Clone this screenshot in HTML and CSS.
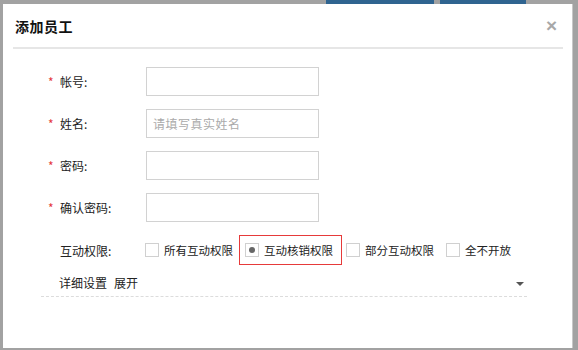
FILE: index.html
```html
<!DOCTYPE html>
<html lang="zh-CN">
<head>
    <meta charset="UTF-8">
    <meta name="viewport" content="width=device-width, initial-scale=1.0">
    <title>添加员工</title>
    <link rel="stylesheet" href="styles.css">
</head>
<body>
    <div class="backdrop-bar">
        <span class="bg-button bg-button-a"></span>
        <span class="bg-button bg-button-b"></span>
    </div>

    <div class="dialog">
        <header class="dialog-header">
            <h1 class="dialog-title">添加员工</h1>
            <span class="dialog-close">&times;</span>
        </header>

        <form class="staff-form">
            <div class="form-row">
                <label class="form-label"><span class="required">*</span>帐号:</label>
                <input type="text" class="form-input">
            </div>
            <div class="form-row">
                <label class="form-label"><span class="required">*</span>姓名:</label>
                <input type="text" class="form-input" placeholder="请填写真实姓名">
            </div>
            <div class="form-row">
                <label class="form-label"><span class="required">*</span>密码:</label>
                <input type="password" class="form-input">
            </div>
            <div class="form-row">
                <label class="form-label"><span class="required">*</span>确认密码:</label>
                <input type="password" class="form-input">
            </div>

            <div class="perm-row">
                <span class="perm-label">互动权限:</span>
                <div class="perm-options">
                    <span class="perm-option"><span class="check-box"></span>所有互动权限</span>
                    <span class="perm-option is-selected"><span class="check-box"><span class="check-dot"></span></span>互动核销权限</span>
                    <span class="perm-option"><span class="check-box"></span>部分互动权限</span>
                    <span class="perm-option"><span class="check-box"></span>全不开放</span>
                </div>
            </div>

            <div class="detail-row">
                <span class="detail-text">详细设置</span>
                <span class="detail-toggle">展开</span>
                <span class="detail-arrow"></span>
            </div>
        </form>
    </div>
</body>
</html>
```

FILE: styles.css
```css
* {
    margin: 0;
    padding: 0;
    box-sizing: border-box;
}

html, body {
    height: 100%;
}

body {
    font-family: "Noto Sans CJK SC", "Liberation Sans", sans-serif;
    font-size: 12px;
    color: #222;
    background-color: #a2a2a2;
    display: flex;
    flex-direction: column;
    overflow: hidden;
}

.backdrop-bar {
    height: 4px;
    display: flex;
    flex-shrink: 0;
}

.bg-button {
    height: 4px;
    background-color: #2f6490;
}

.bg-button-a {
    margin-left: 326px;
    width: 108px;
}

.bg-button-b {
    margin-left: 6px;
    width: 86px;
}

.dialog {
    flex: 1;
    margin: 0 5px 2px 3px;
    background-color: #fff;
    border-right: 1px solid #c8c8c8;
}

.dialog-header {
    height: 45px;
    margin: 0 9px 0 10px;
    border-bottom: 2px solid #e6e6e6;
    display: flex;
    align-items: center;
    justify-content: space-between;
    padding: 0 6px 0 2px;
}

.dialog-title {
    font-size: 14px;
    font-weight: bold;
    color: #111;
    letter-spacing: 0.5px;
}

.dialog-close {
    font-family: "Liberation Sans", sans-serif;
    font-size: 19px;
    font-weight: bold;
    color: #a8a8a8;
    line-height: 1;
}

.staff-form {
    padding: 18px 0 0 45px;
}

.form-row {
    display: flex;
    align-items: center;
    height: 29px;
    margin-bottom: 13px;
}

.form-label {
    width: 98px;
    display: flex;
    align-items: center;
    color: #222;
}

.required {
    color: #e4393c;
    width: 12px;
    font-size: 12px;
}

.form-input {
    width: 173px;
    height: 29px;
    border: 1px solid #d2d2d2;
    padding: 0 6px;
    font-family: inherit;
    font-size: 12px;
    outline: none;
}

.form-input::placeholder {
    color: #aaa;
    letter-spacing: 0.5px;
}

.perm-row {
    display: flex;
    align-items: center;
    margin-top: 10px;
    padding-left: 12px;
}

.perm-label {
    width: 84px;
}

.perm-options {
    display: flex;
    align-items: center;
    font-size: 11.5px;
}

.perm-option {
    display: flex;
    align-items: center;
    height: 30px;
    margin-right: 10px;
    border: 1px solid transparent;
}

.perm-option:first-child {
    margin-right: 5px;
}

.perm-option.is-selected {
    border-color: #e63a3a;
    padding: 0 8px 0 5px;
    margin-right: 3px;
}

.check-box {
    width: 14px;
    height: 14px;
    border: 1px solid #d0d0d0;
    margin-right: 5px;
    display: flex;
    align-items: center;
    justify-content: center;
}

.check-dot {
    width: 6px;
    height: 6px;
    border-radius: 50%;
    background-color: #666;
}

.detail-row {
    position: relative;
    display: flex;
    align-items: center;
    height: 28px;
    margin: 4px 45px 0 -7px;
    padding-left: 18px;
    border-bottom: 1px dashed #dcdcdc;
}

.detail-toggle {
    margin-left: 7px;
}

.detail-arrow {
    position: absolute;
    right: 3px;
    top: 13px;
    width: 0;
    height: 0;
    border-left: 4px solid transparent;
    border-right: 4px solid transparent;
    border-top: 4px solid #555;
}
```
